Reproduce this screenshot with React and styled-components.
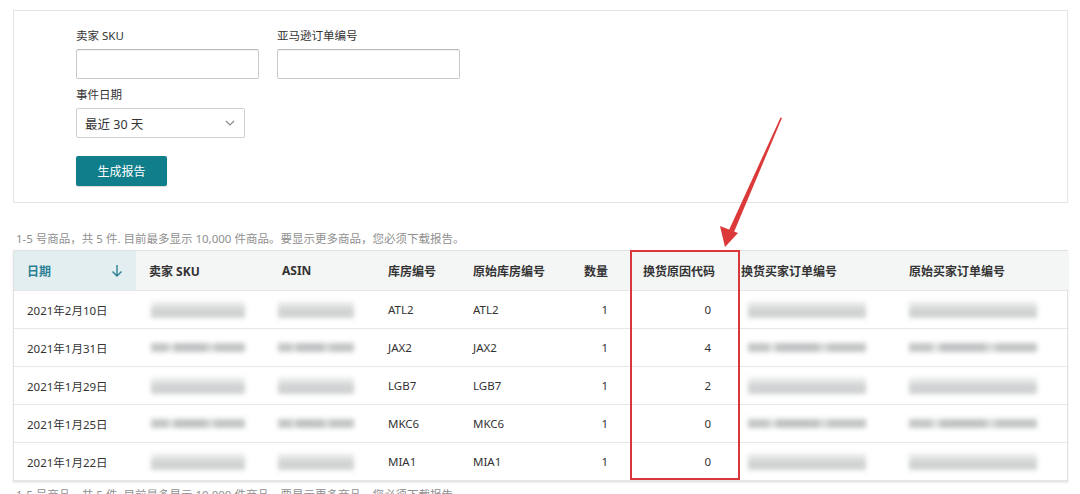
import React from "react";
import styled, { createGlobalStyle } from "styled-components";

const GlobalStyle = createGlobalStyle`
  html, body {
    margin: 0;
    padding: 0;
    background: #ffffff;
    overflow: hidden;
  }
  body {
    font-family: "Noto Sans", "Noto Sans CJK SC", sans-serif;
    color: #333333;
  }
`;

const Page = styled.div`
  position: relative;
  width: 1055px;
  padding: 10px 12px 0 13px;
`;

const FilterPanel = styled.div`
  border: 1px solid #e4e4e4;
  padding: 17px 62px 16px;
`;

const FieldRow = styled.div`
  display: flex;
  gap: 18px;
`;

const Field = styled.div`
  display: flex;
  flex-direction: column;
  margin-top: ${p => p.$top || 0}px;
`;

const Label = styled.label`
  font-size: 11.5px;
  line-height: 16px;
  color: #333;
  margin-bottom: 5px;
`;

const TextInput = styled.input`
  box-sizing: border-box;
  width: 183px;
  height: 30px;
  border: 1px solid #c9c9c9;
  border-top-color: #b9b9b9;
  border-radius: 2px;
  box-shadow: inset 0 1px 1px rgba(0, 0, 0, 0.06);
  outline: none;
`;

const SelectBox = styled.div`
  box-sizing: border-box;
  width: 169px;
  height: 30px;
  border: 1px solid #cfcfcf;
  border-radius: 2px;
  display: flex;
  align-items: center;
  justify-content: space-between;
  padding: 0 9px 0 8px;
  font-size: 12.5px;
  color: #333;
`;

const Button = styled.button`
  margin-top: 18px;
  width: 91px;
  height: 30px;
  border: none;
  border-radius: 2px;
  background: #117e8b;
  color: #ffffff;
  font-family: inherit;
  font-size: 12px;
  box-shadow: 0 1px 1px rgba(0, 0, 0, 0.15);
`;

const Caption = styled.div`
  margin-top: ${p => p.$top}px;
  padding-left: 3px;
  font-size: 11.5px;
  line-height: 16px;
  color: #8f8f8f;
  white-space: nowrap;
`;

const TableWrap = styled.div`
  position: relative;
  margin-top: 3px;
  border: 1px solid #e2e2e2;
  box-shadow: 0 1px 2px rgba(0, 0, 0, 0.08);
`;

const Table = styled.table`
  width: 100%;
  border-collapse: collapse;
  table-layout: fixed;
`;

const Th = styled.th`
  height: 39px;
  padding: 0 13px;
  text-align: ${p => (p.$right ? "right" : "left")};
  font-size: 12px;
  font-weight: 700;
  color: ${p => (p.$active ? "#2b8094" : "#333")};
  background: ${p => (p.$active ? "#e3eef1" : "#f4f5f5")};
  border-bottom: 1px solid #e6e6e6;
  white-space: nowrap;
`;

const SortHead = styled.div`
  display: flex;
  justify-content: space-between;
  align-items: center;
`;

const Td = styled.td`
  height: 37px;
  padding: 0 ${p => p.$pr || 13}px 0 13px;
  text-align: ${p => (p.$right ? "right" : "left")};
  font-size: 11.5px;
  color: #333;
  border-bottom: 1px solid #e8e8e8;
  white-space: nowrap;
`;

const Blur = styled.div`
  width: ${p => p.$w}px;
  height: ${p => p.$h}px;
  margin-left: ${p => p.$ml || 0}px;
  filter: blur(2.5px);
  background: ${p =>
    p.$striped
      ? "linear-gradient(90deg, #c3c6c6 0 18%, #dfe1e1 18% 24%, #bfc2c2 24% 60%, #d8dada 60% 68%, #c2c5c5 68% 100%)"
      : "linear-gradient(180deg, #e4e6e6 0 35%, #cfd2d2 35% 100%)"};
`;

const RedBox = styled.div`
  position: absolute;
  left: 616px;
  top: -1px;
  width: 106px;
  height: 226px;
  border: 2px solid #d8383b;
  pointer-events: none;
`;

const ArrowSvg = styled.svg`
  position: absolute;
  left: 0;
  top: 0;
  pointer-events: none;
`;

const Chevron = () => (
  <svg width="10" height="6" viewBox="0 0 10 6">
    <path d="M1 1l4 4 4-4" fill="none" stroke="#8a8a8a" strokeWidth="1.2" />
  </svg>
);

const DownArrow = () => (
  <svg width="12" height="14" viewBox="0 0 12 14">
    <path d="M6 1v11M1.5 7.5L6 12l4.5-4.5" fill="none" stroke="#2b8094" strokeWidth="1.4" />
  </svg>
);

const rows = [
  { date: "2021年2月10日", fc: "ATL2", code: "0", s: false },
  { date: "2021年1月31日", fc: "JAX2", code: "4", s: true },
  { date: "2021年1月29日", fc: "LGB7", code: "2", s: false },
  { date: "2021年1月25日", fc: "MKC6", code: "0", s: true },
  { date: "2021年1月22日", fc: "MIA1", code: "0", s: false },
];

const widths = [122, 133, 106, 85, 86, 75, 107, 168, 173];

export default function App() {
  return (
    <>
      <GlobalStyle />
      <Page>
        <FilterPanel>
          <FieldRow>
            <Field>
              <Label>卖家 SKU</Label>
              <TextInput />
            </Field>
            <Field>
              <Label>亚马逊订单编号</Label>
              <TextInput />
            </Field>
          </FieldRow>
          <Field $top={8}>
            <Label>事件日期</Label>
            <SelectBox>
              <span>最近 30 天</span>
              <Chevron />
            </SelectBox>
          </Field>
          <Button>生成报告</Button>
        </FilterPanel>

        <Caption $top={28}>
          1-5 号商品，共 5 件. 目前最多显示 10,000 件商品。要显示更多商品，您必须下载报告。
        </Caption>

        <TableWrap>
          <Table>
            <colgroup>
              {widths.map((w, i) => (
                <col key={i} style={{ width: w }} />
              ))}
            </colgroup>
            <thead>
              <tr>
                <Th $active>
                  <SortHead>
                    <span>日期</span>
                    <DownArrow />
                  </SortHead>
                </Th>
                <Th>卖家 SKU</Th>
                <Th>ASIN</Th>
                <Th>库房编号</Th>
                <Th>原始库房编号</Th>
                <Th $right>数量</Th>
                <Th $right>换货原因代码</Th>
                <Th>换货买家订单编号</Th>
                <Th>原始买家订单编号</Th>
              </tr>
            </thead>
            <tbody>
              {rows.map(r => (
                <tr key={r.date}>
                  <Td>{r.date}</Td>
                  <Td>
                    <Blur $w={94} $h={r.s ? 9 : 16} $ml={2} $striped={r.s} />
                  </Td>
                  <Td>
                    <Blur $w={76} $h={r.s ? 9 : 16} $ml={-4} $striped={r.s} />
                  </Td>
                  <Td>{r.fc}</Td>
                  <Td>{r.fc}</Td>
                  <Td $right>1</Td>
                  <Td $right $pr={17}>{r.code}</Td>
                  <Td>
                    <Blur $w={118} $h={r.s ? 9 : 16} $ml={7} $striped={r.s} />
                  </Td>
                  <Td>
                    <Blur $w={128} $h={r.s ? 9 : 16} $striped={r.s} />
                  </Td>
                </tr>
              ))}
            </tbody>
          </Table>
          <RedBox />
        </TableWrap>

        <Caption $top={5}>
          1-5 号商品，共 5 件. 目前最多显示 10,000 件商品。要显示更多商品，您必须下载报告。
        </Caption>

        <ArrowSvg width="1080" height="494" viewBox="0 0 1080 494">
          <polygon points="782,118 780.5,117.5 729,230 734,232" fill="#dc3a3a" />
          <polygon points="725,247 720,226 738,233" fill="#dc3a3a" />
        </ArrowSvg>
      </Page>
    </>
  );
}
